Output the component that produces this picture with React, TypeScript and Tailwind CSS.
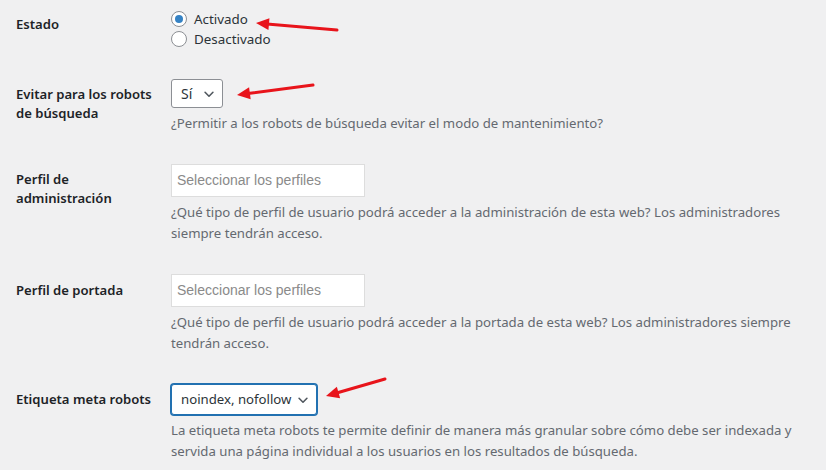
import React from "react";

const font = { fontFamily: '"Noto Sans", "Open Sans", sans-serif' };

function Arrow({ x1, y1, x2, y2 }: { x1: number; y1: number; x2: number; y2: number }) {
  // x1,y1 = tail ; x2,y2 = tip
  const dx = x2 - x1;
  const dy = y2 - y1;
  const len = Math.sqrt(dx * dx + dy * dy);
  const ux = dx / len;
  const uy = dy / len;
  const hl = 13;
  const hw = 6;
  const bx = x2 - ux * hl;
  const by = y2 - uy * hl;
  const p1 = `${bx - uy * hw},${by + ux * hw}`;
  const p2 = `${bx + uy * hw},${by - ux * hw}`;
  return (
    <g>
      <line x1={x1} y1={y1} x2={bx + ux * 2} y2={by + uy * 2} stroke="#e8141b" strokeWidth={3} strokeLinecap="round" />
      <polygon points={`${x2},${y2} ${p1} ${p2}`} fill="#e8141b" />
    </g>
  );
}

function Chevron() {
  return (
    <svg width="14" height="14" viewBox="0 0 16 16" fill="none" stroke="#50575e" strokeWidth="1.8" strokeLinecap="round" strokeLinejoin="round">
      <path d="M3.5 6l4.5 4.5L12.5 6" />
    </svg>
  );
}

function Radio({ checked, label }: { checked?: boolean; label: string }) {
  return (
    <label className="flex items-center h-[20px]">
      <span className="w-[16px] h-[16px] rounded-full border border-[#8c8f94] bg-white flex items-center justify-center">
        {checked && <span className="w-[8px] h-[8px] rounded-full bg-[#3582c4]" />}
      </span>
      <span className="ml-[7px] text-[13.4px] text-[#2c3338] whitespace-nowrap">{label}</span>
    </label>
  );
}

function Label({ children, className = "" }: { children: React.ReactNode; className?: string }) {
  return (
    <div className={`w-[155px] shrink-0 whitespace-nowrap text-[13.1px] leading-[19px] font-semibold text-[#1d2327] ${className}`}>
      {children}
    </div>
  );
}

function Desc({ children }: { children: React.ReactNode }) {
  return <p className="text-[13.2px] leading-[21px] text-[#646970] mt-[5px] whitespace-nowrap">{children}</p>;
}

function ProfileInput() {
  return (
    <div className="w-[194px] h-[33px] bg-white border border-[#dddddd] flex items-center px-[5px]">
      <span className="text-[14px] text-[#8a8a8a]" style={{ fontFamily: '"Liberation Sans", Arial, sans-serif' }}>
        Seleccionar los perfiles
      </span>
    </div>
  );
}

export default function App() {
  return (
    <div className="relative w-[826px] h-[470px] bg-[#f0f0f1] overflow-hidden" style={font}>
      <div className="pl-[16px] flex flex-col">
        {/* Estado */}
        <div className="flex pt-[9px]">
          <Label className="pt-[6px]">Estado</Label>
          <div className="flex flex-col">
            <Radio checked label="Activado" />
            <Radio label="Desactivado" />
          </div>
        </div>

        {/* Evitar robots */}
        <div className="flex pt-[30px]">
          <Label className="pt-[6px]">
            Evitar para los robots
            <br />
            de búsqueda
          </Label>
          <div className="flex flex-col items-start">
            <div className="w-[52px] h-[29px] bg-white border border-[#8c8f94] rounded-[3px] flex items-center justify-between pl-[9px] pr-[6px]">
              <span className="text-[14px] text-[#2c3338]">Sí</span>
              <Chevron />
            </div>
            <Desc>¿Permitir a los robots de búsqueda evitar el modo de mantenimiento?</Desc>
          </div>
        </div>

        {/* Perfil administracion */}
        <div className="flex pt-[30px]">
          <Label className="pt-[6px]">
            Perfil de
            <br />
            administración
          </Label>
          <div className="flex flex-col items-start">
            <ProfileInput />
            <Desc>
              ¿Qué tipo de perfil de usuario podrá acceder a la administración de esta web? Los administradores
              <br />
              siempre tendrán acceso.
            </Desc>
          </div>
        </div>

        {/* Perfil portada */}
        <div className="flex pt-[30px]">
          <Label className="pt-[7px]">Perfil de portada</Label>
          <div className="flex flex-col items-start">
            <ProfileInput />
            <Desc>
              ¿Qué tipo de perfil de usuario podrá acceder a la portada de esta web? Los administradores siempre
              <br />
              tendrán acceso.
            </Desc>
          </div>
        </div>

        {/* Etiqueta meta robots */}
        <div className="flex pt-[30px]">
          <Label className="pt-[6px]">Etiqueta meta robots</Label>
          <div className="flex flex-col items-start">
            <div className="w-[146px] h-[31px] bg-white border border-[#2271b1] shadow-[0_0_0_1px_#2271b1] rounded-[3px] flex items-center justify-between pl-[9px] pr-[6px]">
              <span className="text-[13.2px] text-[#2c3338] whitespace-nowrap">noindex, nofollow</span>
              <Chevron />
            </div>
            <Desc>
              La etiqueta meta robots te permite definir de manera más granular sobre cómo debe ser indexada y
              <br />
              servida una página individual a los usuarios en los resultados de búsqueda.
            </Desc>
          </div>
        </div>
      </div>

      <svg className="absolute left-0 top-0 pointer-events-none" width="826" height="470">
        <Arrow x1={337} y1={30} x2={256} y2={23} />
        <Arrow x1={313} y1={85} x2={237} y2={95} />
        <Arrow x1={385} y1={379} x2={326} y2={396} />
      </svg>
    </div>
  );
}
